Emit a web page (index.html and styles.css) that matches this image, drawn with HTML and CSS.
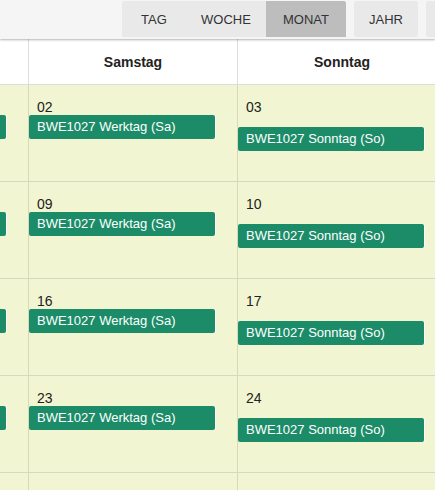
FILE: index.html
```html
<!DOCTYPE html>
<html lang="de">
<head>
	<meta charset="UTF-8">
	<title>Kalender - Monat</title>
	<link rel="stylesheet" href="styles.css">
</head>
<body>

	<div class="toolbar">
		<div class="btn-group">
			<button class="btn">TAG</button>
			<button class="btn">WOCHE</button>
			<button class="btn active">MONAT</button>
		</div>
		<button class="btn">JAHR</button>
		<button class="btn">LISTE</button>
	</div>

	<div class="calendar">
		<div class="cal-head">
			<div class="head-cell">Freitag</div>
			<div class="head-cell">Samstag</div>
			<div class="head-cell">Sonntag</div>
		</div>

		<div class="cal-row">
			<div class="day"><div class="day-num">01</div><div class="event">BWE1027 Werktag (Fr)</div></div>
			<div class="day"><div class="day-num">02</div><div class="event">BWE1027 Werktag (Sa)</div></div>
			<div class="day sunday"><div class="day-num">03</div><div class="event">BWE1027 Sonntag (So)</div></div>
		</div>
		<div class="cal-row">
			<div class="day"><div class="day-num">08</div><div class="event">BWE1027 Werktag (Fr)</div></div>
			<div class="day"><div class="day-num">09</div><div class="event">BWE1027 Werktag (Sa)</div></div>
			<div class="day sunday"><div class="day-num">10</div><div class="event">BWE1027 Sonntag (So)</div></div>
		</div>
		<div class="cal-row">
			<div class="day"><div class="day-num">15</div><div class="event">BWE1027 Werktag (Fr)</div></div>
			<div class="day"><div class="day-num">16</div><div class="event">BWE1027 Werktag (Sa)</div></div>
			<div class="day sunday"><div class="day-num">17</div><div class="event">BWE1027 Sonntag (So)</div></div>
		</div>
		<div class="cal-row">
			<div class="day"><div class="day-num">22</div><div class="event">BWE1027 Werktag (Fr)</div></div>
			<div class="day"><div class="day-num">23</div><div class="event">BWE1027 Werktag (Sa)</div></div>
			<div class="day sunday"><div class="day-num">24</div><div class="event">BWE1027 Sonntag (So)</div></div>
		</div>
		<div class="cal-row">
			<div class="day"><div class="day-num">29</div></div>
			<div class="day"><div class="day-num">30</div></div>
			<div class="day sunday"><div class="day-num">31</div></div>
		</div>
	</div>

</body>
</html>
```

FILE: styles.css
```css
body{
	margin: 0;
	width: 435px;
	height: 490px;
	overflow: hidden;
	font: 13px/16px "Liberation Sans", Arial, sans-serif;
	color: #222;
	background: #fff;
}

/* Ansicht-Umschalter oben */
.toolbar{
	position: relative;
	z-index: 1;
	display: flex;
	gap: 8px;
	height: 39px;
	padding: 1px 0 0 122px;
	box-sizing: border-box;
	background: #f5f5f5;
	box-shadow: 0 1px 2px rgba(0,0,0,.3);
	white-space: nowrap;
}
.btn-group{
	flex: none;
	display: flex;
	border-radius: 2px;
	overflow: hidden;
}
.btn{
	flex: none;
	height: 36px;
	min-width: 64px;
	padding: 0 15px;
	border: 0;
	border-radius: 2px;
	background: #e9e9e9;
	color: #333;
	font: 13px "Liberation Sans", Arial, sans-serif;
	text-transform: uppercase;
}
.btn-group .btn{
	border-radius: 0;
}
.btn-group .btn:nth-child(2){
	min-width: 80px;
}
.btn.active{
	min-width: 80px;
	background: #bdbdbd;
}

/* Monatsraster, Freitag ist nach links gescrollt */
.calendar{
	width: 627px;
	margin-left: -180px;
}
.cal-head,
.cal-row{
	display: grid;
	grid-template-columns: repeat(3, 209px);
}
.head-cell{
	height: 46px;
	border-right: 1px solid #ddd;
	border-bottom: 1px solid #ddd;
	box-sizing: border-box;
	display: flex;
	align-items: center;
	justify-content: center;
	font-weight: bold;
	font-size: 14px;
	background: #fff;
}
.day{
	height: 97px;
	box-sizing: border-box;
	padding-top: 14px;
	border-right: 1px solid #d6d9bb;
	border-bottom: 1px solid #d6d9bb;
	background: #f1f5d1;
}
.day-num{
	padding-left: 8px;
	height: 16px;
	font-size: 14px;
}
.event{
	width: 186px;
	height: 24px;
	line-height: 24px;
	padding-left: 8px;
	box-sizing: border-box;
	border-radius: 2px;
	background: #1c8c68;
	box-shadow: 1px 0 0 rgba(255,255,255,.8);
	color: #fff;
	white-space: nowrap;
	overflow: hidden;
}
.sunday .event{
	margin-top: 12px;
}
```
